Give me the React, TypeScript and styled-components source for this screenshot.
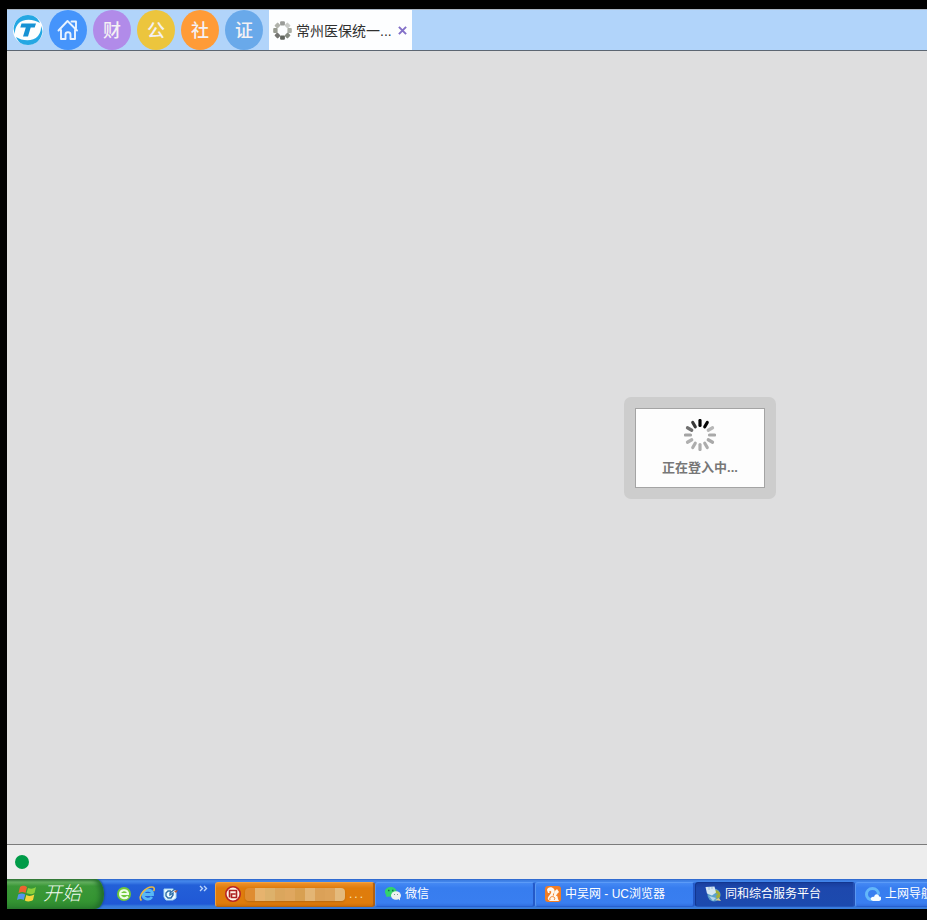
import React from "react";
import styled, { createGlobalStyle, css } from "styled-components";

const GlobalStyle = createGlobalStyle`
  * { box-sizing: border-box; }
  html, body { margin: 0; background: #000; overflow: hidden; }
  body, button { font-family: "Liberation Sans", "Noto Sans CJK SC", sans-serif; }
  button { margin: 0; padding: 0; border: 0; background: none; cursor: pointer; }
  svg { display: block; flex: none; }
`;

const Desktop = styled.div`
  display: flex;
  flex-direction: column;
  height: 100vh;
  padding: 9px 0 11px 7px;
  background: #000;
  overflow: hidden;
`;

const TopBar = styled.header`
  display: flex;
  align-items: stretch;
  flex: none;
  height: 42px;
  padding-left: 6px;
  background: #b1d4fa;
  border-top: 1px solid #a9b5c4;
  border-bottom: 1px solid #5c6672;
`;

const Logo = styled.div`
  display: flex;
  align-items: center;
  width: 36px;
`;

const Shortcuts = styled.nav`
  display: flex;
  gap: 6px;
`;

const Shortcut = styled.button<{ $color: string }>`
  display: flex;
  align-items: center;
  justify-content: center;
  width: 38px;
  height: 40px;
  border-radius: 50%;
  background: ${(p) => p.$color};
  color: #f4f1f4;
  font-size: 18px;
  font-weight: 500;
  line-height: 20px;
  padding-top: 2px;
`;

const HomeShortcut = styled(Shortcut)`
  padding-top: 0;
`;

const Tab = styled.div`
  display: flex;
  align-items: center;
  width: 143px;
  margin-left: 6px;
  padding: 0 0 0 4px;
  background: #fdfeff;
`;

const TabTitle = styled.span`
  flex: 1;
  margin-left: 4px;
  padding-top: 2px;
  color: #303030;
  font-size: 14px;
  line-height: 20px;
  white-space: nowrap;
`;

const CloseButton = styled.button`
  display: flex;
  align-items: center;
  justify-content: center;
  width: 20px;
  height: 20px;
`;

const Workspace = styled.main`
  display: flex;
  flex: 1;
  align-items: center;
  justify-content: flex-end;
  min-height: 0;
  padding: 1px 151px 0 0;
  background: #dededf;
`;

const DialogFrame = styled.div`
  width: 152px;
  padding: 11px;
  border-radius: 7px;
  background: #cdcdcd;
`;

const DialogBody = styled.div`
  display: flex;
  flex-direction: column;
  align-items: center;
  height: 80px;
  padding-top: 10px;
  border: 1px solid #a4a4a4;
  background: #fdfdfd;
`;

const DialogText = styled.p`
  margin: 8px 0 0;
  color: #777;
  font-size: 13px;
  font-weight: 700;
  line-height: 18px;
`;

const StatusBar = styled.footer`
  display: flex;
  align-items: center;
  flex: none;
  height: 35px;
  padding-left: 8px;
  border-top: 1px solid #7b7b7b;
  background: #ededed;
`;

const StatusLight = styled.span`
  width: 14px;
  height: 14px;
  border-radius: 50%;
  background: #009b48;
`;

const Taskbar = styled.div`
  display: flex;
  flex: none;
  height: 30px;
  overflow: hidden;
  background: linear-gradient(#2a62c8 0, #4488ec 2px, #3878e4 4px, #2360d8 6px, #2058d6 25px, #3478dc 27px, #3c80dc 100%);
`;

const StartButton = styled.button`
  display: flex;
  align-items: center;
  gap: 6px;
  width: 97px;
  padding-left: 10px;
  border-radius: 0 9px 9px 0 / 0 15px 15px 0;
  background: linear-gradient(#3a7a3c 0, #68b463 3px, #3b9838 7px, #349432 22px, #2d842e 100%);
  box-shadow: inset -4px 0 5px #226e2b, 1px 0 2px #194a9c;
  color: #f2faf0;
  font-size: 19px;
  font-style: italic;
  font-weight: 300;
  line-height: 26px;
`;

const QuickLaunch = styled.div`
  display: flex;
  align-items: center;
  gap: 7px;
  width: 111px;
  padding-left: 12px;
`;

const QuickButton = styled.button`
  width: 16px;
  height: 16px;
`;

const MoreButton = styled.button`
  align-self: flex-start;
  margin: 6px 0 0 14px;
`;

const TaskList = styled.div`
  display: flex;
  flex: 1;
  min-width: 0;
  padding: 3px 0 2px;
  overflow: hidden;
`;

type TaskState = "normal" | "alert" | "active";

const taskLook = {
  normal: css`
    border-color: #5b9bf8 #2459c8 #2860d0 #5a98f2;
    background: linear-gradient(#4589f4, #377def 5px, #397ef0 20px, #316edf);
  `,
  alert: css`
    border-color: #f4a23c #b06012 #b8660e #f3a33c;
    background: linear-gradient(#ed902a, #df7c0c 5px, #df7c0b 20px, #cf6e08);
  `,
  active: css`
    border-color: #123690 #2450b4 #2456bc #123690;
    background: linear-gradient(#183e9e, #1d48ad 5px, #1c4aae);
  `,
};

const Task = styled.button<{ $state: TaskState }>`
  display: flex;
  flex: none;
  align-items: center;
  gap: 4px;
  width: 160px;
  padding: 0 0 1px 9px;
  border: 1px solid;
  border-right-width: 2px;
  border-radius: 3px;
  color: #fff;
  font-size: 12px;
  line-height: 16px;
  white-space: nowrap;
  ${(p) => taskLook[p.$state]}
`;

const Mosaic = styled.span`
  display: flex;
  height: 13px;
  border-radius: 4px;
  overflow: hidden;
  box-shadow: 0 1px 2px #b8690f;
`;

const MosaicTile = styled.span<{ $color: string }>`
  width: 10px;
  background: ${(p) => p.$color};
`;

const Dots = styled.span`
  color: #f8e2b0;
  letter-spacing: 2px;
`;

const CompanyLogo = () => (
  <svg width="30" height="30" viewBox="0 0 30 30" aria-label="T">
    <circle cx="15" cy="15" r="15" fill="#fdfefe" />
    <path d="M1 11C3 4 8 0 15 0c6 0 10 3 12 8C21 4 10 3 5 9c-3 4-3 7-3 10-1-3-2-5-1-8Z" fill="#24a7e3" />
    <path d="M29 19c-2 7-7 11-14 11-6 0-10-3-12-8 6 4 17 5 22-1 3-4 3-7 3-10 1 3 2 5 1 8Z" fill="#24a7e3" />
    <path d="M8.500 8.500h14.500l-1.300 4h-4L15 21.500h-5l2.800-9H7.300Z" fill="#1692d4" />
  </svg>
);

const HomeIcon = () => (
  <svg width="22" height="22" viewBox="0 0 22 22" fill="none" stroke="#e9f3ff" strokeWidth="1.900" strokeLinejoin="round" strokeLinecap="round">
    <path d="M1.500 11.500 10.500 2l9.500 9.500M14.500 2.500H19v7M4 11v9h4.500v-4.500c0-3 5-3 5 0V20H18v-9" />
  </svg>
);

const tabDots = ["#999b98", "#c9cbc8", "#aaaea5", "#858a80", "#62665f", "#747471", "#989b91", "#b1b3ac"];

const TabSpinner = () => (
  <svg width="19" height="19" viewBox="-9.500 -9.500 19 19">
    {tabDots.map((fill, i) => (
      <rect key={i} x="-2.400" y="-9.300" width="4.800" height="4.400" rx="1" fill={fill} transform={`rotate(${i * 45})`} />
    ))}
  </svg>
);

const CloseIcon = () => (
  <svg width="9" height="9" viewBox="0 0 10 10" stroke="#8370c8" strokeWidth="2.200">
    <path d="m1 1 8 8M9 1 1 9" />
  </svg>
);

const spokes = ["#050505", "#080808", "#b7b7b7", "#a9a9a9", "#a9a9a9", "#acacac", "#adadad", "#adadad", "#b0b0b0", "#a4a4a4", "#717171", "#383838"];

const LoadingSpinner = () => (
  <svg width="32" height="32" viewBox="-16 -16 32 32">
    {spokes.map((stroke, i) => (
      <path key={i} d="M0-9.500v-5" stroke={stroke} strokeWidth="3.200" strokeLinecap="round" transform={`rotate(${i * 30})`} />
    ))}
  </svg>
);

const WindowsIcon = () => (
  <svg width="20" height="18" viewBox="0 0 20 18">
    <path d="M3 2c3-2 5-1 7 0L8.500 8C6 6.500 4 7 1.500 8Z" fill="#ed6330" />
    <path d="M11 3c3 1 5 1 8-1l-1.500 6c-3 2-5 1-8 0Z" fill="#8bce3b" />
    <path d="M1.200 9.500c3-1.500 5-1 7 0L6.700 15c-2-1-4-1.500-6.700 0Z" fill="#5495ed" />
    <path d="M9.300 10c3 1.500 5 1 8-.500L16 15c-3 2-6 1.500-8.200.500Z" fill="#f6d43c" />
  </svg>
);

const GreenBrowserIcon = () => (
  <svg width="16" height="16" viewBox="0 0 16 16">
    <circle cx="8" cy="8" r="7" fill="#70c83b" />
    <path d="M12 10.500C9 14 4 12 4 8s6.500-5.500 8-1v1H4.500" fill="none" stroke="#effce8" strokeWidth="2" />
  </svg>
);

const ExplorerIcon = () => (
  <svg width="16" height="16" viewBox="0 0 16 16" fill="none">
    <path d="M13 11c-3 4-9 2-9-2.500S12 2.500 13.500 7v1.500H5" stroke="#58b8f5" strokeWidth="2.800" />
    <path d="M2.500 14.500C-2 11 6 1 13 1c3 0 2.500 3 1.500 4" stroke="#e9b944" strokeWidth="1.600" />
  </svg>
);

const DesktopIcon = () => (
  <svg width="16" height="16" viewBox="0 0 16 16">
    <path d="M2 3h9l3 2v7l-3 2H4l-2-3Z" fill="#eefaff" stroke="#a5d7f3" />
    <path d="M9 5H6L4 7v3l2 2h3l2-3V7L8 9V7l5-4" fill="none" stroke="#2b6ea9" strokeWidth="1.400" />
    <path d="m12 5 4-1-2 3Z" fill="#b35a33" />
  </svg>
);

const ChevronIcon = () => (
  <svg width="9" height="7" viewBox="0 0 9 7" fill="none" stroke="#b9d4fb" strokeWidth="1.400">
    <path d="m1 1 2.500 2.500L1 6M5 1l2.500 2.500L5 6" />
  </svg>
);

const SealIcon = () => (
  <svg width="16" height="16" viewBox="0 0 16 16" fill="none">
    <circle cx="8" cy="8" r="7.200" fill="#fff5e9" stroke="#b92323" strokeWidth="1.600" />
    <path d="M4.500 11.500V4.500h7v7h-5V8h4" stroke="#ad2020" strokeWidth="1.600" />
  </svg>
);

const WeChatIcon = () => (
  <svg width="16" height="16" viewBox="0 0 16 16">
    <path d="M1.500 11 1 9C-2 4 2 1 6 1c4 0 6 3 5.500 6-.500 3-4 4.500-7.500 3.500Z" fill="#32d46b" />
    <ellipse cx="11" cy="9.500" rx="5" ry="4.300" fill="#ecf1ef" />
    <path d="m13 12.500 2 2v-4Z" fill="#ecf1ef" />
    <path d="M3 4.500h1.500M7 4.500h1.500" stroke="#176c4b" strokeWidth="1.300" />
    <path d="M9 8.500h1M12 8.500h1" stroke="#7b9792" />
  </svg>
);

const SquirrelIcon = () => (
  <svg width="16" height="16" viewBox="0 0 16 16">
    <rect width="16" height="16" rx="3" fill="#f37d24" />
    <path d="M2 4c0-3 5-4 7-1s-2 5-1 7c2-1 0-4 3-6l1-1 2 3-2 2 1 5 1 2H5c-5-3 0-5 1-8 1-2-1-3-2-1l1 1H3Z" fill="#fff7ed" />
    <path d="M5 14c-1-3 2-4 4-3 1 1 1 2 0 3M11 9l2 1" fill="none" stroke="#f37d24" />
  </svg>
);

const PlatformIcon = () => (
  <svg width="16" height="16" viewBox="0 0 16 16">
    <circle cx="9" cy="9" r="6.500" fill="#5ba1cb" />
    <path d="M10 4c4 0 6 3 5 7l-3 2-1-3 2-2-3-1Z" fill="#a4ae37" />
    <path d="m.500 1 9-.500 1.500 6-4 3-5-2Z" fill="#d5e7f3" />
    <path d="M4 1v3M7 1v2" stroke="#9ec0dc" />
    <path d="m4 10 7 2-3 3Z" fill="#b5d4e9" />
    <path d="m10 14 4-2 2 3Z" fill="#d6cf93" />
  </svg>
);

const CloudIcon = () => (
  <svg width="16" height="16" viewBox="0 0 16 16">
    <path d="M13.500 8.500c0-3.500-2.500-6-6-6s-6 2.500-6 6 3 5.500 6 5" fill="none" stroke="#63b7fa" strokeWidth="3" />
    <path d="M8 15c-4-1-2-5 1-4 1-4 5-3 5-.500 3-.500 3 4 0 4.500Z" fill="#f7fcff" />
  </svg>
);

const shortcuts = [
  { label: "财", color: "#b18be9" },
  { label: "公", color: "#ecc53d" },
  { label: "社", color: "#ff9b37" },
  { label: "证", color: "#69a9ea" },
];

const tiles = ["#df8c31", "#e6b36e", "#ddb16b", "#dba65d", "#dfa75f", "#d8a052", "#e3b575", "#dba158", "#dda35a", "#e4ba7c"];

const tasks: { title: string; state: TaskState; icon: React.ReactNode }[] = [
  { title: "微信", state: "normal", icon: <WeChatIcon /> },
  { title: "中吴网 - UC浏览器", state: "normal", icon: <SquirrelIcon /> },
  { title: "同和综合服务平台", state: "active", icon: <PlatformIcon /> },
  { title: "上网导航", state: "normal", icon: <CloudIcon /> },
];

export default function App() {
  return (
    <>
      <GlobalStyle />
      <Desktop lang="zh-CN">
        <TopBar>
          <Logo><CompanyLogo /></Logo>
          <Shortcuts>
            <HomeShortcut $color="#4594fb" aria-label="主页"><HomeIcon /></HomeShortcut>
            {shortcuts.map((item) => (
              <Shortcut key={item.label} $color={item.color}>{item.label}</Shortcut>
            ))}
          </Shortcuts>
          <Tab>
            <TabSpinner />
            <TabTitle>常州医保统一...</TabTitle>
            <CloseButton aria-label="关闭"><CloseIcon /></CloseButton>
          </Tab>
        </TopBar>
        <Workspace>
          <DialogFrame role="status">
            <DialogBody>
              <LoadingSpinner />
              <DialogText>正在登入中...</DialogText>
            </DialogBody>
          </DialogFrame>
        </Workspace>
        <StatusBar><StatusLight /></StatusBar>
        <Taskbar>
          <StartButton><WindowsIcon />开始</StartButton>
          <QuickLaunch>
            <QuickButton aria-label="浏览器"><GreenBrowserIcon /></QuickButton>
            <QuickButton aria-label="Internet Explorer"><ExplorerIcon /></QuickButton>
            <QuickButton aria-label="显示桌面"><DesktopIcon /></QuickButton>
            <MoreButton aria-label="更多"><ChevronIcon /></MoreButton>
          </QuickLaunch>
          <TaskList>
            <Task $state="alert">
              <SealIcon />
              <Mosaic>
                {tiles.map((color, i) => <MosaicTile key={i} $color={color} />)}
              </Mosaic>
              <Dots>...</Dots>
            </Task>
            {tasks.map((task) => (
              <Task key={task.title} $state={task.state}>{task.icon}{task.title}</Task>
            ))}
          </TaskList>
        </Taskbar>
      </Desktop>
    </>
  );
}
